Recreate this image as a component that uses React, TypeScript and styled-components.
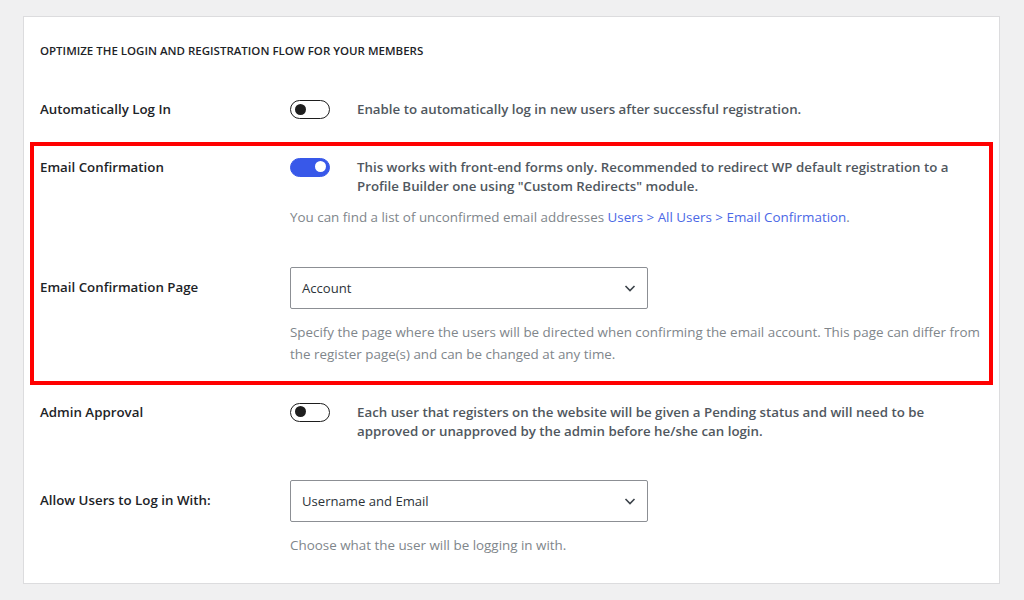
import styled, { createGlobalStyle } from "styled-components";

const Global = createGlobalStyle`
  html, body {
    margin: 0;
    background: #f0f0f1;
    font-family: "Open Sans", "Noto Sans", sans-serif;
  }
`;

const Page = styled.div`
  padding: 16px 24px 16px 23px;
`;

const Card = styled.div`
  background: #fff;
  border: 1px solid #dcdcde;
  padding: 26px 16px 27px 16px;
`;

const Title = styled.h2`
  margin: 0 0 41px;
  font-size: 11.5px;
  font-weight: 600;
  line-height: 16px;
  text-transform: uppercase;
  color: #1d2327;
`;

const Highlight = styled.div`
  margin: 0 -10px;
  padding: 12px 6px 16px;
  border: 4px solid #ff0000;
`;

const Row = styled.div<{ $center?: boolean; $gap?: number; $top?: number }>`
  display: flex;
  align-items: ${({ $center }) => ($center ? "center" : "flex-start")};
  margin-top: ${({ $top }) => $top ?? 0}px;
  margin-bottom: ${({ $gap }) => $gap ?? 0}px;
`;

const Label = styled.div`
  width: 250px;
  flex: none;
  font-size: 13.3px;
  font-weight: 600;
  line-height: 19px;
  color: #1d2327;
`;

const Field = styled.div`
  flex: 1;
  min-width: 0;
`;

const ToggleLine = styled.div`
  display: flex;
  align-items: flex-start;
  gap: 27px;
`;

const Toggle = styled.span<{ $on?: boolean }>`
  position: relative;
  flex: none;
  width: 40px;
  height: 19px;
  box-sizing: border-box;
  border-radius: 10px;
  border: 1.5px solid ${({ $on }) => ($on ? "#3858e9" : "#1e1e1e")};
  background: ${({ $on }) => ($on ? "#3858e9" : "#fff")};
  &::after {
    content: "";
    position: absolute;
    top: 2.5px;
    left: ${({ $on }) => ($on ? "23.5px" : "3.5px")};
    width: 11px;
    height: 11px;
    border-radius: 50%;
    background: ${({ $on }) => ($on ? "#fff" : "#1e1e1e")};
  }
`;

const Desc = styled.p`
  margin: 0;
  font-size: 13.3px;
  font-weight: 600;
  line-height: 19.5px;
  color: #50575e;
`;

const Note = styled.p<{ $top?: number }>`
  margin: ${({ $top }) => $top ?? 12}px 0 0;
  font-size: 13.4px;
  line-height: 22px;
  color: #80868b;
`;

const Link = styled.a`
  color: #4b68e6;
  text-decoration: none;
`;

const Select = styled.div`
  width: 358px;
  height: 42px;
  box-sizing: border-box;
  border: 1px solid #8c8f94;
  border-radius: 2px;
  display: flex;
  align-items: center;
  justify-content: space-between;
  padding: 0 10px 0 11px;
  font-size: 13.1px;
  color: #2c3338;
`;

function Chevron() {
  return (
    <svg width="14" height="14" viewBox="0 0 14 14" fill="none">
      <path d="M2.5 5l4.5 4.5L11.5 5" stroke="#3c434a" strokeWidth="1.6" />
    </svg>
  );
}

function App() {
  return (
    <>
      <Global />
      <Page>
        <Card>
          <Title>Optimize the login and registration flow for your members</Title>

          <Row $gap={22}>
            <Label>Automatically Log In</Label>
            <Field>
              <ToggleLine>
                <Toggle />
                <Desc>Enable to automatically log in new users after successful registration.</Desc>
              </ToggleLine>
            </Field>
          </Row>

          <Highlight>
            <Row $gap={39}>
              <Label>Email Confirmation</Label>
              <Field>
                <ToggleLine>
                  <Toggle $on />
                  <Desc>
                    This works with front-end forms only. Recommended to redirect WP default registration to a
                    Profile Builder one using "Custom Redirects" module.
                  </Desc>
                </ToggleLine>
                <Note $top={9}>
                  You can find a list of unconfirmed email addresses{" "}
                  <Link href="#">Users &gt; All Users &gt; Email Confirmation</Link>.
                </Note>
              </Field>
            </Row>

            <Row $center>
              <Label>Email Confirmation Page</Label>
              <Field>
                <Select>
                  <span>Account</span>
                  <Chevron />
                </Select>
              </Field>
            </Row>
            <Row>
              <Label />
              <Field>
                <Note>
                  Specify the page where the users will be directed when confirming the email account. This page can
                  differ from the register page(s) and can be changed at any time.
                </Note>
              </Field>
            </Row>
          </Highlight>

          <Row $gap={38} $top={18}>
            <Label>Admin Approval</Label>
            <Field>
              <ToggleLine>
                <Toggle />
                <Desc>
                  Each user that registers on the website will be given a Pending status and will need to be approved
                  or unapproved by the admin before he/she can login.
                </Desc>
              </ToggleLine>
            </Field>
          </Row>

          <Row $center>
            <Label>Allow Users to Log in With:</Label>
            <Field>
              <Select>
                <span>Username and Email</span>
                <Chevron />
              </Select>
            </Field>
          </Row>
          <Row>
            <Label />
            <Field>
              <Note $top={12}>Choose what the user will be logging in with.</Note>
            </Field>
          </Row>
        </Card>
      </Page>
    </>
  );
}

export default App;
